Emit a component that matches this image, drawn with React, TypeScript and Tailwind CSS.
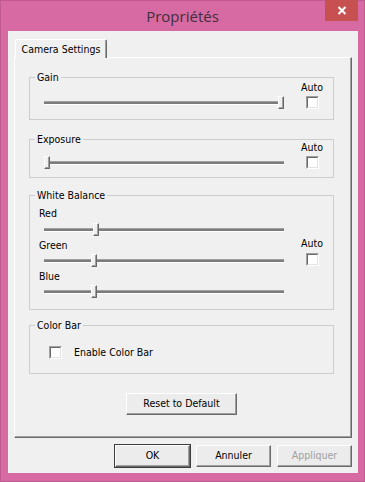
import React from "react";

const Track = ({ thumb }: { thumb: string }) => (
  <div className="relative w-[240px] h-[13px] shrink-0">
    <div className="absolute left-0 right-0 top-[5px] h-[4px] border-t border-t-[#a0a0a0] border-b border-b-white bg-[#7c7c7c]" />
    <div
      className={
        "absolute top-0 w-[6px] h-[13px] bg-[#f0f0f0] border-l border-t border-l-white border-t-white border-r border-b border-r-[#696969] border-b-[#696969] shadow-[inset_-1px_-1px_0_#a0a0a0] " +
        thumb
      }
    />
  </div>
);

const Check = () => (
  <div className="w-[13px] h-[13px] shrink-0 border border-t-[#a0a0a0] border-l-[#a0a0a0] border-r-white border-b-white">
    <div className="w-full h-full bg-white border border-t-[#696969] border-l-[#696969] border-r-[#e3e3e3] border-b-[#e3e3e3]" />
  </div>
);

const Auto = ({ extra }: { extra?: string }) => (
  <div className={"ml-[15px] w-[26px] flex flex-col items-center gap-[2px] " + (extra || "")}>
    <span className="leading-[13px]">Auto</span>
    <Check />
  </div>
);

const Group = ({
  label,
  h,
  mt,
  children,
}: {
  label: string;
  h: string;
  mt: string;
  children: React.ReactNode;
}) => (
  <div className={"relative w-[305px] border border-[#cdcdcd] " + h + " " + mt}>
    <span className="absolute -top-[7px] left-[5px] px-[2px] bg-[#f0f0f0] leading-[13px]">{label}</span>
    {children}
  </div>
);

const Btn = ({
  children,
  w,
  def,
  disabled,
}: {
  children: React.ReactNode;
  w: string;
  def?: boolean;
  disabled?: boolean;
}) => (
  <div
    className={
      "h-[22px] flex items-center justify-center bg-[#ececec] border border-t-white border-l-white border-r-[#696969] border-b-[#696969] shadow-[inset_-1px_-1px_0_#a0a0a0] " +
      w +
      (def ? " outline outline-1 outline-[#3c3c3c]" : "") +
      (disabled ? " text-[#a0a0a0]" : " text-black")
    }
  >
    {children}
  </div>
);

export default function App() {
  return (
    <div
      className="relative w-[365px] h-[482px] bg-[#d769a3] border border-[#c05b91] flex flex-col"
      style={{ fontFamily: '"DejaVu Sans Condensed", "DejaVu Sans", sans-serif' }}
    >
      <div className="h-[30px] flex items-center justify-center">
        <span
          className="text-[15px] text-[#40303a] leading-none mt-[1px]"
          style={{ fontFamily: '"Open Sans", "Noto Sans", sans-serif' }}
        >
          Propriétés
        </span>
      </div>
      <div className="absolute -top-[1px] right-[6px] w-[33px] h-[21px] bg-[#c75050] flex items-center justify-center">
        <svg width="10" height="9" viewBox="0 0 10 9">
          <path d="M1.5 1 L8.5 8 M8.5 1 L1.5 8" stroke="white" strokeWidth="2" />
        </svg>
      </div>

      <div className="ml-[7px] mr-[6px] h-[442px] bg-[#f0f0f0] flex flex-col pt-[8px] text-[10.5px] text-black">
        <div className="relative z-10 ml-[7px] w-[92px] h-[19px] bg-[#f0f0f0] border-l border-t border-l-white border-t-white border-r border-r-[#696969] shadow-[inset_-1px_0_0_#a0a0a0] rounded-t-[2px] flex items-center justify-center">
          <span className="leading-[13px]">Camera Settings</span>
        </div>
        <div className="-mt-px ml-[6px] w-[338px] h-[381px] border-l border-t border-l-white border-t-white border-r border-b border-r-[#696969] border-b-[#696969] shadow-[inset_-1px_-1px_0_#a0a0a0] flex flex-col pl-[14px]">
          <Group label="Gain" h="h-[43px]" mt="mt-[19px]">
            <div className="flex items-end pl-[14px] pt-[3px]">
              <Track thumb="left-[234px]" />
              <Auto />
            </div>
          </Group>

          <Group label="Exposure" h="h-[39px]" mt="mt-[19px]">
            <div className="flex items-end pl-[14px] pt-[1px]">
              <Track thumb="left-0" />
              <Auto />
            </div>
          </Group>

          <Group label="White Balance" h="h-[115px]" mt="mt-[17px]">
            <div className="flex items-start pl-[9px] pt-[11px]">
              <div className="flex flex-col">
                <span className="leading-[13px]">Red</span>
                <div className="ml-[5px] mt-[3px]">
                  <Track thumb="left-[49px]" />
                </div>
                <span className="leading-[13px] mt-[3px]">Green</span>
                <div className="ml-[5px] mt-[2px]">
                  <Track thumb="left-[47px]" />
                </div>
                <span className="leading-[13px] mt-[3px]">Blue</span>
                <div className="ml-[5px] mt-[2px]">
                  <Track thumb="left-[47px]" />
                </div>
              </div>
              <Auto extra="mt-[30px] gap-[3px]" />
            </div>
          </Group>

          <Group label="Color Bar" h="h-[49px]" mt="mt-[15px]">
            <div className="flex items-center pl-[19px] pt-[20px]">
              <Check />
              <span className="ml-[12px] leading-[13px]">Enable Color Bar</span>
            </div>
          </Group>

          <div className="w-[305px] flex justify-center mt-[19px]">
            <Btn w="w-[111px]">Reset to Default</Btn>
          </div>
        </div>

        <div className="mt-[7px] flex justify-end gap-[6px] pr-[6px]">
          <Btn w="w-[75px]" def>
            OK
          </Btn>
          <Btn w="w-[75px]">Annuler</Btn>
          <Btn w="w-[75px]" disabled>
            Appliquer
          </Btn>
        </div>
      </div>
    </div>
  );
}
